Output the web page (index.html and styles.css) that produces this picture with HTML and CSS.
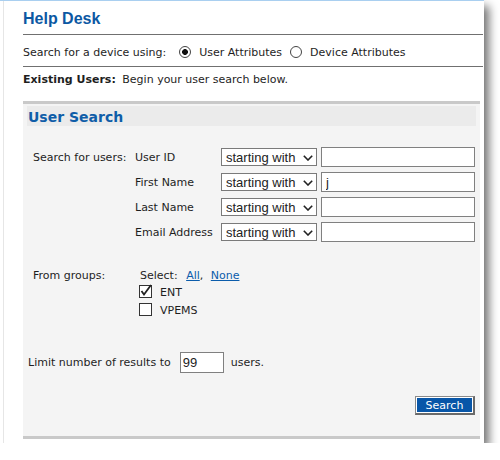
FILE: index.html
```html
<!DOCTYPE html>
<html lang="en">

<head>
    <meta charset="UTF-8">
    <meta name="viewport" content="width=device-width, initial-scale=1.0">
    <title>Help Desk</title>
    <link rel="stylesheet" href="styles.css">
</head>

<body>
    <div class="window">
        <div class="frame">
            <h1 class="title">Help Desk</h1>

            <div class="mode-row">
                <span>Search for a device using:</span>
                <input type="radio" name="mode" id="modeUser" class="radio first" checked>
                <label for="modeUser">User Attributes</label>
                <input type="radio" name="mode" id="modeDevice" class="radio">
                <label for="modeDevice">Device Attributes</label>
            </div>

            <p class="intro"><strong>Existing Users:</strong> Begin your user search below.</p>

            <div class="search-box">
                <h2 class="box-head">User Search</h2>

                <div class="fields">
                    <span class="field-title">Search for users:</span>
                    <label>User ID</label>
                    <span class="select">
                        <select><option>starting with</option></select>
                        <svg class="chevron" width="10" height="6" viewBox="0 0 10 6"><path d="M0.8 0.8 L5 5 L9.2 0.8" fill="none" stroke="#222" stroke-width="1.6"/></svg>
                    </span>
                    <input type="text" class="text-input">

                    <span></span>
                    <label>First Name</label>
                    <span class="select">
                        <select><option>starting with</option></select>
                        <svg class="chevron" width="10" height="6" viewBox="0 0 10 6"><path d="M0.8 0.8 L5 5 L9.2 0.8" fill="none" stroke="#222" stroke-width="1.6"/></svg>
                    </span>
                    <input type="text" class="text-input" value="j">

                    <span></span>
                    <label>Last Name</label>
                    <span class="select">
                        <select><option>starting with</option></select>
                        <svg class="chevron" width="10" height="6" viewBox="0 0 10 6"><path d="M0.8 0.8 L5 5 L9.2 0.8" fill="none" stroke="#222" stroke-width="1.6"/></svg>
                    </span>
                    <input type="text" class="text-input">

                    <span></span>
                    <label>Email Address</label>
                    <span class="select">
                        <select><option>starting with</option></select>
                        <svg class="chevron" width="10" height="6" viewBox="0 0 10 6"><path d="M0.8 0.8 L5 5 L9.2 0.8" fill="none" stroke="#222" stroke-width="1.6"/></svg>
                    </span>
                    <input type="text" class="text-input">
                </div>

                <div class="groups">
                    <span class="groups-title">From groups:</span>
                    <div class="groups-list">
                        <div class="select-links">Select: <a href="#" class="first-link">All</a>, <a href="#">None</a></div>
                        <label class="check">
                            <input type="checkbox" checked>
                            <svg width="14" height="15" viewBox="0 0 14 15"><rect x="0.5" y="2.5" width="12" height="12" fill="#fff" stroke="#333"/><path d="M2.5 8 L5 11.5 L12 2" fill="none" stroke="#222" stroke-width="1.8"/></svg>
                            ENT
                        </label>
                        <label class="check">
                            <input type="checkbox">
                            <svg width="14" height="15" viewBox="0 0 14 15"><rect x="0.5" y="2.5" width="12" height="12" fill="#fff" stroke="#333"/></svg>
                            VPEMS
                        </label>
                    </div>
                </div>

                <div class="limit">
                    <span>Limit number of results to</span>
                    <input type="text" class="limit-input" value="99">
                    <span>users.</span>
                </div>

                <div class="actions">
                    <button class="search-btn">Search</button>
                </div>
            </div>
        </div>
    </div>
</body>

</html>
```

FILE: styles.css
```css
body {
    margin: 0;
    background-color: #fff;
    font-family: "DejaVu Sans", Verdana, sans-serif;
    font-size: 11px;
    color: #1e1e1e;
}

.window {
    width: 484px;
    height: 443px;
    box-sizing: border-box;
    border-top: 1px solid #a9cff0;
    background-color: #fff;
    box-shadow: 5px 6px 9px rgba(0, 0, 0, 0.55);
}

.frame {
    height: 100%;
    margin-left: 3px;
    padding: 0 1px 0 19px;
    border-left: 1px solid #e6e6e6;
}

.title {
    margin: 0;
    padding: 9px 0 6px;
    font-family: "Liberation Sans", Arial, sans-serif;
    font-size: 16px;
    line-height: 18px;
    color: #0c58a3;
    border-bottom: 1px solid #707070;
}

.mode-row {
    display: flex;
    align-items: center;
    padding: 11px 0 6px;
    line-height: 14px;
    border-bottom: 1px solid #707070;
}

.radio {
    appearance: none;
    width: 12px;
    height: 12px;
    margin: 0 8px 2px 8px;
    border: 1px solid #444;
    border-radius: 50%;
    background-color: #fff;
}

.radio.first {
    margin-left: 13px;
}

.radio:checked {
    background: radial-gradient(circle, #111 0 2.6px, #fff 3.2px);
}

.intro {
    margin: 0;
    padding-top: 6px;
    line-height: 14px;
}

.intro strong {
    margin-right: 3px;
}

.search-box {
    height: 338px;
    box-sizing: border-box;
    margin: 14px 3px 0 0;
    padding: 2px 4px 0;
    background-color: #f4f4f4;
    border-top: 3px solid #c9c9c9;
    border-bottom: 3px solid #c9c9c9;
}

.box-head {
    margin: 0;
    padding: 2px 0 0 1px;
    height: 20px;
    box-sizing: border-box;
    font-size: 14px;
    line-height: 18px;
    color: #0f5da8;
    background-color: #ebebeb;
}

.fields {
    display: grid;
    grid-template-columns: 102px 86px 100px 154px;
    grid-auto-rows: 20px;
    row-gap: 5px;
    align-items: center;
    margin-top: 21px;
    padding-left: 6px;
}

.select {
    position: relative;
    display: block;
    width: 96px;
    height: 18px;
}

.select select {
    appearance: none;
    width: 96px;
    height: 18px;
    margin: 0;
    padding: 0 0 0 4px;
    border: 1px solid #7a7a7a;
    border-radius: 0;
    background-color: #fff;
    font-family: "Liberation Sans", Arial, sans-serif;
    font-size: 13px;
    color: #222;
}

.chevron {
    position: absolute;
    top: 7px;
    right: 4px;
    pointer-events: none;
}

.text-input {
    width: 154px;
    height: 20px;
    box-sizing: border-box;
    margin: 0;
    padding: 0 4px;
    border: 1px solid #808080;
    border-radius: 0;
    background-color: #fff;
    font-family: "Liberation Sans", Arial, sans-serif;
    font-size: 13px;
    color: #222;
}

.groups {
    display: flex;
    margin-top: 26px;
    padding-left: 6px;
}

.groups-title {
    width: 107px;
    line-height: 15px;
}

.select-links {
    line-height: 15px;
}

.select-links a {
    color: #0b5cab;
}

.select-links .first-link {
    margin-left: 5px;
}

.select-links a + a {
    margin-left: 4px;
}

.check {
    display: flex;
    align-items: center;
    gap: 7px;
    height: 18px;
    margin-left: -1px;
}

.check input {
    display: none;
}

.check svg {
    margin-top: -3px;
}

.limit {
    display: flex;
    align-items: center;
    margin-top: 33px;
    padding-left: 1px;
}

.limit-input {
    width: 44px;
    height: 21px;
    box-sizing: border-box;
    margin: 0 7px 0 9px;
    padding: 0 2px;
    border: 1px solid #808080;
    border-radius: 0;
    background-color: #fff;
    font-family: "Liberation Sans", Arial, sans-serif;
    font-size: 13px;
    color: #222;
}

.actions {
    display: flex;
    justify-content: flex-end;
    margin-top: 23px;
    padding-right: 1px;
}

.search-btn {
    width: 60px;
    height: 19px;
    box-sizing: border-box;
    padding: 0;
    border: 1px solid #8a8a8a;
    border-right: 2px solid #6a6a6a;
    border-bottom: 2px solid #6a6a6a;
    border-radius: 0;
    box-shadow: inset 1px 1px 0 #fff, inset -1px -1px 0 #fff;
    background-color: #0856a8;
    font-family: "DejaVu Sans", Verdana, sans-serif;
    font-size: 11px;
    line-height: 15px;
    color: #fff;
}
```
